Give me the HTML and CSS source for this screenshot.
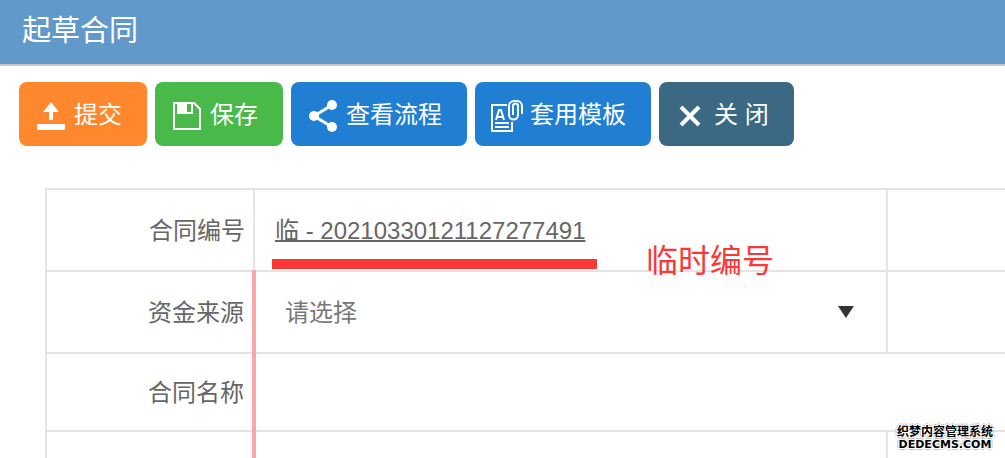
FILE: index.html
```html
<!DOCTYPE html>
<html lang="zh-CN">
<head>
    <meta charset="UTF-8">
    <meta name="viewport" content="width=device-width, initial-scale=1.0">
    <title>起草合同</title>
    <link rel="stylesheet" href="styles.css">
</head>
<body>
<header class="page-header">
    <h1>起草合同</h1>
</header>

<div class="toolbar">
    <button type="button" class="btn btn-submit">
        <svg width="28" height="32" viewBox="0 0 28 32" fill="#fff">
            <path d="M14 2L22 12H16V20H12V12H6Z"/>
            <path d="M0 24H28V30H0Z"/>
        </svg>
        <span>提交</span>
    </button>
    <button type="button" class="btn btn-save">
        <svg width="28" height="32" viewBox="0 0 28 32">
            <path d="M1 3H21L27 9V29H1Z" fill="none" stroke="#fff" stroke-width="2"/>
            <path d="M4 3H20V14H4ZM14 4V12H18V4Z" fill="#fff" fill-rule="evenodd"/>
        </svg>
        <span>保存</span>
    </button>
    <button type="button" class="btn btn-flow">
        <svg width="28" height="32" viewBox="0 0 28 32" fill="#fff">
            <path d="M23 5L5 16L23 27" fill="none" stroke="#fff" stroke-width="3"/>
            <circle cx="23" cy="5" r="5"/>
            <circle cx="5" cy="16" r="5"/>
            <circle cx="23" cy="27" r="5"/>
        </svg>
        <span>查看流程</span>
    </button>
    <button type="button" class="btn btn-template">
        <svg width="32" height="32" viewBox="0 0 32 32" fill="none" stroke="#fff" stroke-width="2">
            <path d="M16 5H1V31H21V22"/>
            <path d="M5 20L8 10H10L13 20M6 17H12"/>
            <path d="M4 23H18M4 27H18"/>
            <path d="M31 14V6A5 5 0 0 0 26 1H23A5 5 0 0 0 18 6V15A4 4 0 0 0 27 15V6A2 2 0 0 0 22 6V15"/>
        </svg>
        <span>套用模板</span>
    </button>
    <button type="button" class="btn btn-close">
        <svg width="28" height="32" viewBox="0 0 28 32">
            <path d="M4 7L22 25M22 7L4 25" stroke="#fff" stroke-width="4"/>
        </svg>
        <span>关 闭</span>
    </button>
</div>

<main class="form-wrap">
    <table class="form-table">
        <colgroup>
            <col class="col-label">
            <col class="col-value">
            <col>
        </colgroup>
        <tr>
            <th scope="row">合同编号</th>
            <td>
                <div class="contract-no">
                    <span class="number">临 - 20210330121127277491</span>
                    <span class="mark-line"></span>
                    <span class="mark-text">临时编号</span>
                </div>
            </td>
            <td></td>
        </tr>
        <tr>
            <th scope="row"><label for="fundSource">资金来源</label></th>
            <td class="required">
                <div class="select-box">
                    <select id="fundSource">
                        <option>请选择</option>
                    </select>
                </div>
            </td>
            <td></td>
        </tr>
        <tr class="row-name">
            <th scope="row"><label for="contractName">合同名称</label></th>
            <td class="required" colspan="2"><input type="text" id="contractName"></td>
        </tr>
        <tr class="row-empty">
            <th></th>
            <td class="required"></td>
            <td></td>
        </tr>
    </table>
</main>

<div class="watermark">
    <div class="watermark-name">织梦内容管理系统</div>
    <div class="watermark-site">DEDECMS.COM</div>
</div>
</body>
</html>
```
FILE: styles.css
```css
:root {
    --header-bg: #6099ca;
    --border-color: #e4e4e4;
    --text-color: #666;
    --required-color: #f7a8a8;
    --mark-color: #fb3838;
}

* {
    box-sizing: border-box;
    margin: 0;
    padding: 0;
}

html,
body {
    height: 100%;
}

body {
    position: relative;
    overflow: hidden;
    background: #fff;
    color: var(--text-color);
    font-family: "Liberation Sans", "Noto Sans CJK SC", sans-serif;
    font-size: 24px;
    line-height: 32px;
}

.page-header {
    height: 66px;
    padding: 0 22px;
    background: var(--header-bg);
    border-bottom: 2px solid #c8c8c8;
}

h1 {
    color: #fff;
    font-size: 29px;
    font-weight: normal;
    line-height: 62px;
}

.toolbar {
    display: flex;
    gap: 8px;
    padding: 16px 19px 0;
}

.btn {
    display: flex;
    align-items: center;
    gap: 9px;
    height: 64px;
    padding: 2px 25px 0 18px;
    border: none;
    border-radius: 8px;
    color: #fff;
    font-family: inherit;
    font-size: 24px;
    line-height: 32px;
    white-space: nowrap;
    cursor: pointer;
}

.btn svg {
    flex: none;
    margin-top: 2px;
}

.btn-submit {
    background: #ff872d;
}

.btn-save {
    background: #49b949;
}

.btn-flow,
.btn-template {
    background: #217fd3;
}

.btn-template {
    gap: 7px;
    padding-left: 16px;
}

.btn-close {
    background: #3b6882;
}

.form-wrap {
    padding: 42px 0 0 45px;
}

.form-table {
    width: 100%;
    table-layout: fixed;
    border-collapse: collapse;
    border-right: hidden;
}

.col-label {
    width: 208px;
}

.col-value {
    width: 66%;
}

.form-table th,
.form-table td {
    height: 82px;
    border: 2px solid var(--border-color);
    vertical-align: middle;
}

.form-table th {
    padding: 2px 8px 0 0;
    font-weight: normal;
    text-align: right;
}

.form-table td {
    padding: 2px 20px 0;
}

.form-table .row-name th,
.form-table .row-name td {
    height: 78px;
}

.form-table .row-empty th,
.form-table .row-empty td {
    height: 27px;
    border-bottom: none;
}

.form-table td.required {
    border-left: 4px solid var(--required-color);
}

.contract-no {
    position: relative;
}

.number {
    text-decoration: underline;
    text-decoration-thickness: 2px;
}

.mark-line {
    position: absolute;
    top: 44px;
    left: -3px;
    width: 325px;
    height: 10px;
    background: var(--mark-color);
}

.mark-text {
    position: absolute;
    top: 26px;
    left: 371px;
    color: var(--mark-color);
    font-size: 32px;
    line-height: 40px;
}

.select-box {
    position: relative;
}

.select-box::after {
    content: "";
    position: absolute;
    top: 9px;
    right: 12px;
    width: 16px;
    height: 12px;
    background: #333;
    clip-path: polygon(0 0, 100% 0, 50% 100%);
    pointer-events: none;
}

select,
input {
    display: block;
    width: 100%;
    height: 32px;
    border: none;
    outline: none;
    background: none;
    color: #777;
    font-family: inherit;
    font-size: 24px;
    line-height: 32px;
}

select {
    padding-left: 9px;
    appearance: none;
}

.watermark {
    position: absolute;
    right: 12px;
    bottom: 7px;
    color: #000;
    font-size: 12px;
    font-weight: bold;
    line-height: 14px;
    text-align: center;
    text-shadow: 1px 1px #fff, -1px -1px #fff, 1px -1px #fff, -1px 1px #fff,
        2px 0 1px #bbb, -2px 0 1px #bbb, 0 2px 1px #bbb, 0 -2px 1px #bbb;
}

.watermark-site {
    font-family: "DejaVu Sans", sans-serif;
    font-size: 11px;
    line-height: 12px;
}
```
